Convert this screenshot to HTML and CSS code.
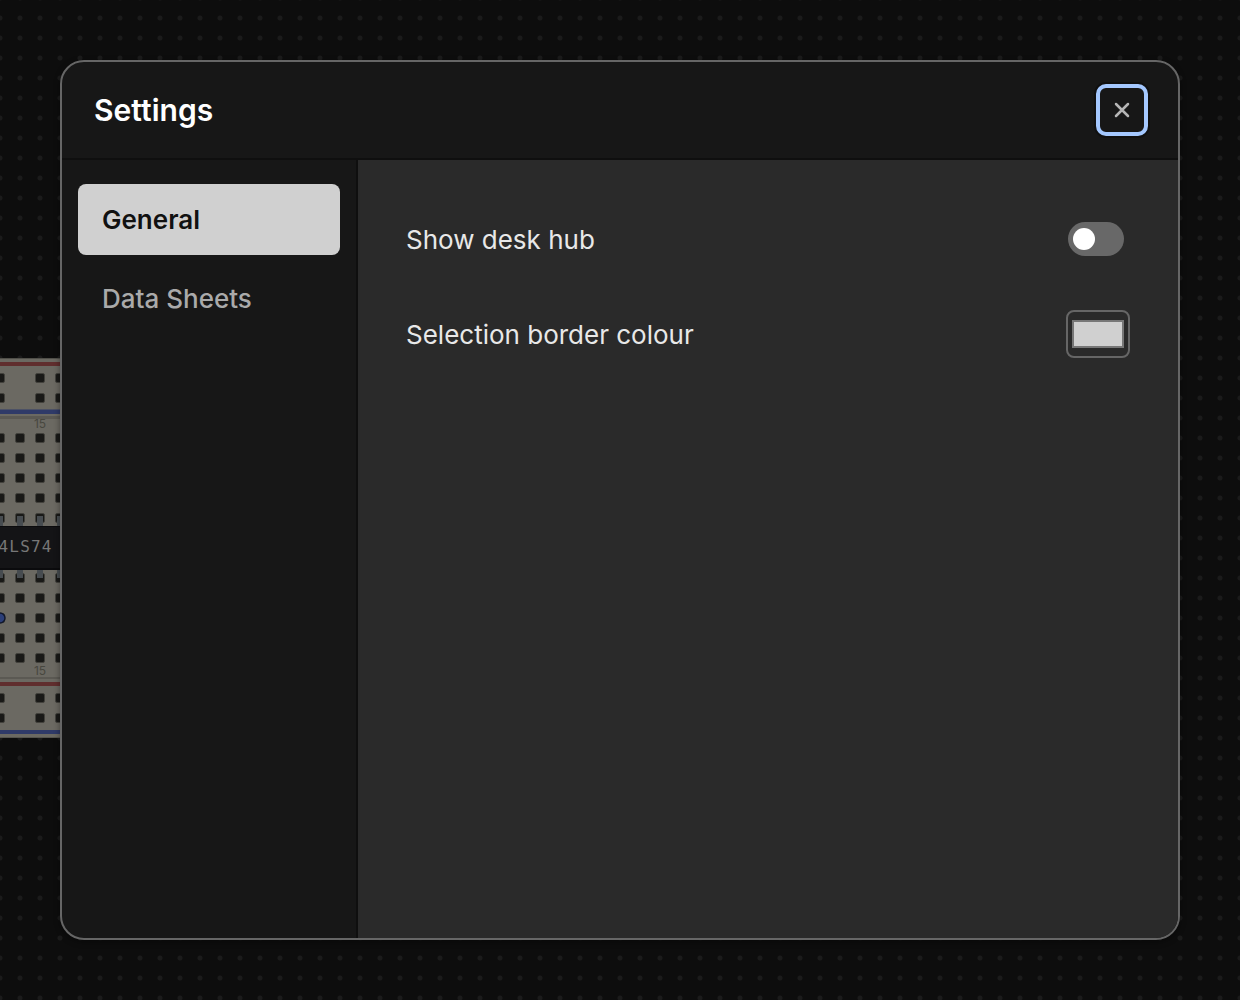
FILE: index.html
```
<!DOCTYPE html>
<html lang="en">
<head>
  <meta charset="UTF-8">
  <title>Settings</title>
  <meta name="viewport" content="width=device-width, initial-scale=1">
  <link rel="stylesheet" href="styles.css">
</head>
<body>

<!-- Breadboard on the desk -->
<svg class="board" width="80" height="380" viewBox="0 358 80 380">
  <defs>
    <pattern id="holes" x="-10" y="428" width="20" height="20" patternUnits="userSpaceOnUse">
      <rect x="5.500" y="5.500" width="9" height="9" rx="1.500" fill="#191917" stroke="#42413c" stroke-width="1"/>
    </pattern>
  </defs>
  <rect x="-20" y="358" width="100" height="380" fill="#6b6962"/>
  <rect y="358" width="80" height="1" fill="#504f49"/>
  <rect y="362" width="80" height="4" fill="#602e2e"/>
  <rect y="409.500" width="80" height="4.500" fill="#2f3a68"/>
  <rect y="416" width="80" height="3" fill="#5b5953"/>
  <rect y="428" width="80" height="100" fill="url(#holes)"/>
  <rect y="568" width="80" height="100" fill="url(#holes)"/>
  <rect y="368" width="80" height="40" fill="url(#holes)"/>
  <rect y="688" width="80" height="40" fill="url(#holes)"/>
  <rect x="10" y="368" width="20" height="40" fill="#6b6962"/>
  <rect x="10" y="688" width="20" height="40" fill="#6b6962"/>
  <rect y="677" width="80" height="2" fill="#5b5953"/>
  <rect y="682" width="80" height="4" fill="#602e2e"/>
  <rect y="730" width="80" height="4" fill="#2f3a68"/>
  <rect y="737" width="80" height="1" fill="#55544e"/>
  <!-- chip legs -->
  <g fill="#474c50">
    <rect x="-3" y="516" width="6" height="62"/>
    <rect x="17" y="516" width="6" height="62"/>
    <rect x="37" y="516" width="6" height="62"/>
    <rect x="57" y="516" width="6" height="62"/>
  </g>
  <rect y="526" width="80" height="44" fill="#0b0b0d"/>
  <rect y="527" width="80" height="41" fill="#141416"/>
  <text class="chip-name" x="-1.500" y="552">4LS74</text>
  <circle cx="0" cy="618" r="5" fill="#2b3e78" stroke="#12182b" stroke-width="1.500"/>
  <text class="col-num" x="40" y="428">15</text>
  <text class="col-num" x="40" y="675">15</text>
</svg>

<div class="modal">
  <header class="modal-header">
    <h1>Settings</h1>
    <button class="close-btn" aria-label="Close">
      <svg width="16" height="16" viewBox="0 0 16 16">
        <path d="M2 2L14 14M14 2L2 14" fill="none" stroke="#b5b5b5" stroke-width="2.500" stroke-linecap="round"/>
      </svg>
    </button>
  </header>
  <div class="modal-body">
    <nav class="tabs">
      <a class="tab active">General</a>
      <a class="tab">Data Sheets</a>
    </nav>
    <main class="panel">
      <div class="row">
        <span>Show desk hub</span>
        <div class="toggle"><div class="knob"></div></div>
      </div>
      <div class="row">
        <span>Selection border colour</span>
        <div class="color-input"><div class="swatch"></div></div>
      </div>
    </main>
  </div>
</div>

</body>
</html>
```
FILE: styles.css
```
* {
  box-sizing: border-box;
}
body {
  margin: 0;
  height: 1000px;
  padding: 60px;
  overflow: hidden;
  font-family: Inter, "Liberation Sans", sans-serif;
  background-color: #0d0d0d;
  background-image: radial-gradient(circle, #1b1b1b 2px, transparent 3px);
  background-size: 20px 20px;
  background-position: -10px 8px;
}
.board {
  position: absolute;
  left: 0;
  top: 358px;
}
.chip-name {
  font-family: "DejaVu Sans Mono", monospace;
  font-size: 16px;
  letter-spacing: 1.2px;
  fill: #777;
}
.col-num {
  font-size: 12px;
  text-anchor: middle;
  fill: #48473f;
}
.modal {
  position: relative;
  display: flex;
  flex-direction: column;
  height: 880px;
  border: 2px solid #666;
  border-radius: 24px;
  background: #171717;
  overflow: hidden;
  box-shadow: 0 2px 6px rgba(0,0,0,0.4);
}
.modal-header {
  display: flex;
  justify-content: space-between;
  align-items: center;
  height: 98px;
  padding: 0 30px 0 32px;
  border-bottom: 2px solid #0f0f0f;
}
.modal-header h1 {
  margin: 0;
  font-size: 30px;
  font-weight: 600;
  letter-spacing: 0.05px;
  color: #fff;
}
.close-btn {
  display: flex;
  align-items: center;
  justify-content: center;
  width: 52px; height: 52px;
  padding: 0;
  background: #171717;
  border: 4px solid #a4c8ff;
  border-radius: 10px;
  box-shadow: 0 0 0 2px #101010;
}
.modal-body {
  display: flex;
  flex: 1;
}
.tabs {
  display: flex;
  flex-direction: column;
  gap: 8px;
  width: 296px;
  padding: 24px 16px;
  border-right: 2px solid #0f0f0f;
}
.tab {
  height: 71px;
  padding: 0 24px;
  border-radius: 8px;
  font-size: 26px;
  font-weight: 500;
  line-height: 71px;
  color: #aaa;
}
.tab.active {
  background: #d0d0d0;
  font-weight: 600;
  color: #111;
}
.panel {
  flex: 1;
  padding: 32px 48px;
  background: #2a2a2a;
}
.row {
  display: flex;
  justify-content: space-between;
  align-items: center;
  height: 95px;
  font-size: 26px;
  color: #e8e8e8;
}
.toggle {
  width: 56px; height: 34px;
  margin: 0 6px 2px 0;
  padding: 6px 5px;
  border-radius: 17px;
  background: #686868;
}
.knob {
  width: 22px; height: 22px;
  border-radius: 50%;
  background: #fff;
}
.color-input {
  width: 64px; height: 48px;
  margin-bottom: 2px;
  padding: 8px 4px;
  border: 2px solid #666;
  border-radius: 8px;
}
.swatch {
  height: 28px;
  background: #d0d0d0;
  border: 2px solid #777;
}
```
